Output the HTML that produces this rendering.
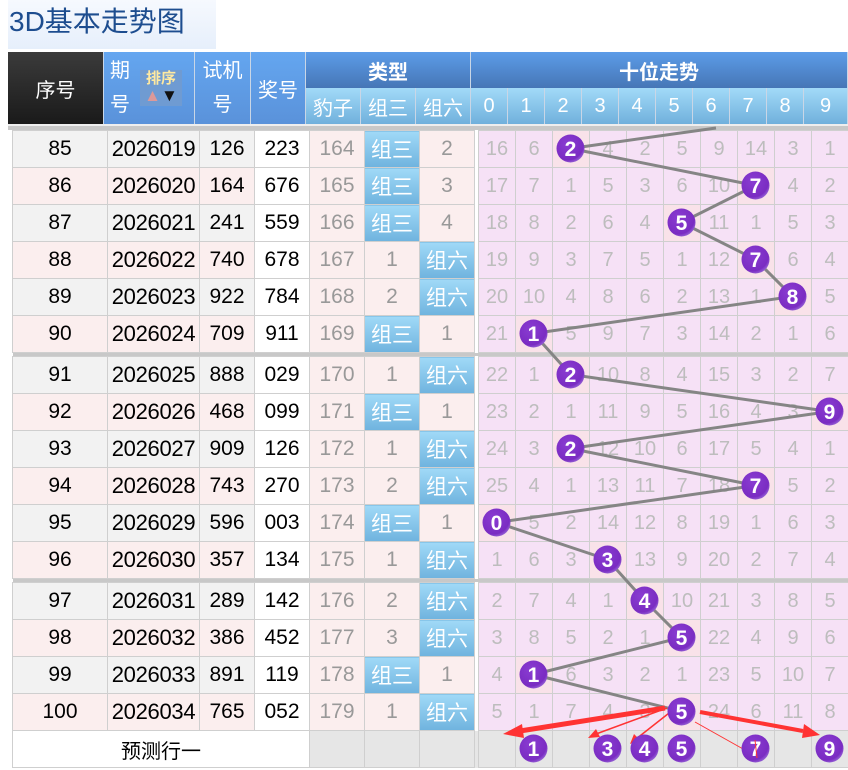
<!DOCTYPE html>
<html><head><meta charset="utf-8"><style>
*{margin:0;padding:0;box-sizing:border-box}
body{width:848px;height:770px;background:#fff;position:relative;overflow:hidden;font-family:"Liberation Sans","Noto Sans CJK SC",sans-serif}
.title{position:absolute;left:8px;top:0;width:208px;height:49px;background:linear-gradient(#f6f9fe,#e6effb);color:#1d4d8f;font-size:28px;line-height:44px;padding-left:1px}
.hd{position:absolute;color:#fff;display:flex;align-items:center;justify-content:center;text-align:center;font-size:20px;border-right:1px solid #c9d6e6}
.dark{background:linear-gradient(#3b3b3b,#1a1a1a)}
.blue{background:linear-gradient(#64a6f0,#5a92da)}
.top{background:linear-gradient(#5c9ce8,#4676b6);font-weight:bold}
.sub{background:linear-gradient(#a2daf8,#70b0dc)}
table{position:absolute;left:12px;top:130px;border-collapse:collapse;table-layout:fixed;width:836px}
td{border:1px solid #cfcfcf;height:37px;text-align:center;font-size:21px;padding:0;white-space:nowrap;overflow:hidden}
tr.s td{height:4px;background:#c8c8c8;border:none}
.g td.a,.g td.b,.g td.c{background:#f2f2f2}
.p td.a,.p td.b,.p td.c{background:#fbeeee}
td.b{font-size:22px;letter-spacing:-0.3px}
td.d{background:#fff}
td.e,td.f{background:#fbeeee;color:#999}
td.bl{background:linear-gradient(#a0d9f7,#6fb3de);color:#fff}
td.x{background:#fff;border-top:none;border-bottom:none}
td.n{background:#f6e1f6;color:#bdbdbd;font-size:20px}
td.h{background:#f9e2e9}
tr.pr td{background:#e6e6e6}
tr.pr td.w{background:#fff;font-size:20px}
svg{position:absolute;left:0;top:0}
</style></head><body>
<div class="title">3D基本走势图</div>
<div class="hd dark" style="left:8px;top:52px;width:96px;height:72px">序号</div>
<div class="hd blue" style="left:104px;top:52px;width:91px;height:72px;justify-content:flex-start;padding-left:6px"><div style="line-height:34px">期<br>号</div><div style="margin-left:10px;width:42px;height:36px;background:#6f9bd2;font-size:15px;line-height:17px;color:#ffe9a0;font-weight:bold">排序<br><span style="color:#d99;font-size:17px">▲</span><span style="color:#111;font-size:17px">▼</span></div></div>
<div class="hd blue" style="left:195px;top:52px;width:56px;height:72px;line-height:34px">试机<br>号</div>
<div class="hd blue" style="left:251px;top:52px;width:55px;height:72px">奖号</div>
<div class="hd top" style="left:306px;top:52px;width:165px;height:36px">类型</div>
<div class="hd sub" style="left:306px;top:88px;width:55px;height:36px">豹子</div>
<div class="hd sub" style="left:361px;top:88px;width:55px;height:36px">组三</div>
<div class="hd sub" style="left:416px;top:88px;width:55px;height:36px">组六</div>
<div class="hd top" style="left:471px;top:52px;width:377px;height:36px">十位走势</div>
<div class="hd sub" style="left:471px;top:88px;width:37px;height:36px">0</div>
<div class="hd sub" style="left:508px;top:88px;width:37px;height:36px">1</div>
<div class="hd sub" style="left:545px;top:88px;width:37px;height:36px">2</div>
<div class="hd sub" style="left:582px;top:88px;width:37px;height:36px">3</div>
<div class="hd sub" style="left:619px;top:88px;width:37px;height:36px">4</div>
<div class="hd sub" style="left:656px;top:88px;width:37px;height:36px">5</div>
<div class="hd sub" style="left:693px;top:88px;width:37px;height:36px">6</div>
<div class="hd sub" style="left:730px;top:88px;width:37px;height:36px">7</div>
<div class="hd sub" style="left:767px;top:88px;width:37px;height:36px">8</div>
<div class="hd sub" style="left:804px;top:88px;width:44px;height:36px">9</div>
<div style="position:absolute;left:8px;top:124px;width:840px;height:2px;background:#eee"></div>
<div style="position:absolute;left:8px;top:126px;width:840px;height:4px;background:#c8c8c8"></div>
<table>
<colgroup><col style="width:95px"><col style="width:92px"><col style="width:55px"><col style="width:55px"><col style="width:55px"><col style="width:55px"><col style="width:55px"><col style="width:4px"><col span="10" style="width:37px"></colgroup>
<tr class="g"><td class="a">85</td><td class="b">2026019</td><td class="c">126</td><td class="d">223</td><td class="e">164</td><td class="f bl">组三</td><td class="f">2</td><td class="x"></td><td class="n">16</td><td class="n">6</td><td class="n h"></td><td class="n">4</td><td class="n">2</td><td class="n">5</td><td class="n">9</td><td class="n">14</td><td class="n">3</td><td class="n">1</td></tr>
<tr class="p"><td class="a">86</td><td class="b">2026020</td><td class="c">164</td><td class="d">676</td><td class="e">165</td><td class="f bl">组三</td><td class="f">3</td><td class="x"></td><td class="n">17</td><td class="n">7</td><td class="n">1</td><td class="n">5</td><td class="n">3</td><td class="n">6</td><td class="n">10</td><td class="n h"></td><td class="n">4</td><td class="n">2</td></tr>
<tr class="g"><td class="a">87</td><td class="b">2026021</td><td class="c">241</td><td class="d">559</td><td class="e">166</td><td class="f bl">组三</td><td class="f">4</td><td class="x"></td><td class="n">18</td><td class="n">8</td><td class="n">2</td><td class="n">6</td><td class="n">4</td><td class="n h"></td><td class="n">11</td><td class="n">1</td><td class="n">5</td><td class="n">3</td></tr>
<tr class="p"><td class="a">88</td><td class="b">2026022</td><td class="c">740</td><td class="d">678</td><td class="e">167</td><td class="f">1</td><td class="f bl">组六</td><td class="x"></td><td class="n">19</td><td class="n">9</td><td class="n">3</td><td class="n">7</td><td class="n">5</td><td class="n">1</td><td class="n">12</td><td class="n h"></td><td class="n">6</td><td class="n">4</td></tr>
<tr class="g"><td class="a">89</td><td class="b">2026023</td><td class="c">922</td><td class="d">784</td><td class="e">168</td><td class="f">2</td><td class="f bl">组六</td><td class="x"></td><td class="n">20</td><td class="n">10</td><td class="n">4</td><td class="n">8</td><td class="n">6</td><td class="n">2</td><td class="n">13</td><td class="n">1</td><td class="n h"></td><td class="n">5</td></tr>
<tr class="p"><td class="a">90</td><td class="b">2026024</td><td class="c">709</td><td class="d">911</td><td class="e">169</td><td class="f bl">组三</td><td class="f">1</td><td class="x"></td><td class="n">21</td><td class="n h"></td><td class="n">5</td><td class="n">9</td><td class="n">7</td><td class="n">3</td><td class="n">14</td><td class="n">2</td><td class="n">1</td><td class="n">6</td></tr>
<tr class="s"><td colspan="18"></td></tr>
<tr class="g"><td class="a">91</td><td class="b">2026025</td><td class="c">888</td><td class="d">029</td><td class="e">170</td><td class="f">1</td><td class="f bl">组六</td><td class="x"></td><td class="n">22</td><td class="n">1</td><td class="n h"></td><td class="n">10</td><td class="n">8</td><td class="n">4</td><td class="n">15</td><td class="n">3</td><td class="n">2</td><td class="n">7</td></tr>
<tr class="p"><td class="a">92</td><td class="b">2026026</td><td class="c">468</td><td class="d">099</td><td class="e">171</td><td class="f bl">组三</td><td class="f">1</td><td class="x"></td><td class="n">23</td><td class="n">2</td><td class="n">1</td><td class="n">11</td><td class="n">9</td><td class="n">5</td><td class="n">16</td><td class="n">4</td><td class="n">3</td><td class="n h"></td></tr>
<tr class="g"><td class="a">93</td><td class="b">2026027</td><td class="c">909</td><td class="d">126</td><td class="e">172</td><td class="f">1</td><td class="f bl">组六</td><td class="x"></td><td class="n">24</td><td class="n">3</td><td class="n h"></td><td class="n">12</td><td class="n">10</td><td class="n">6</td><td class="n">17</td><td class="n">5</td><td class="n">4</td><td class="n">1</td></tr>
<tr class="p"><td class="a">94</td><td class="b">2026028</td><td class="c">743</td><td class="d">270</td><td class="e">173</td><td class="f">2</td><td class="f bl">组六</td><td class="x"></td><td class="n">25</td><td class="n">4</td><td class="n">1</td><td class="n">13</td><td class="n">11</td><td class="n">7</td><td class="n">18</td><td class="n h"></td><td class="n">5</td><td class="n">2</td></tr>
<tr class="g"><td class="a">95</td><td class="b">2026029</td><td class="c">596</td><td class="d">003</td><td class="e">174</td><td class="f bl">组三</td><td class="f">1</td><td class="x"></td><td class="n h"></td><td class="n">5</td><td class="n">2</td><td class="n">14</td><td class="n">12</td><td class="n">8</td><td class="n">19</td><td class="n">1</td><td class="n">6</td><td class="n">3</td></tr>
<tr class="p"><td class="a">96</td><td class="b">2026030</td><td class="c">357</td><td class="d">134</td><td class="e">175</td><td class="f">1</td><td class="f bl">组六</td><td class="x"></td><td class="n">1</td><td class="n">6</td><td class="n">3</td><td class="n h"></td><td class="n">13</td><td class="n">9</td><td class="n">20</td><td class="n">2</td><td class="n">7</td><td class="n">4</td></tr>
<tr class="s"><td colspan="18"></td></tr>
<tr class="g"><td class="a">97</td><td class="b">2026031</td><td class="c">289</td><td class="d">142</td><td class="e">176</td><td class="f">2</td><td class="f bl">组六</td><td class="x"></td><td class="n">2</td><td class="n">7</td><td class="n">4</td><td class="n">1</td><td class="n h"></td><td class="n">10</td><td class="n">21</td><td class="n">3</td><td class="n">8</td><td class="n">5</td></tr>
<tr class="p"><td class="a">98</td><td class="b">2026032</td><td class="c">386</td><td class="d">452</td><td class="e">177</td><td class="f">3</td><td class="f bl">组六</td><td class="x"></td><td class="n">3</td><td class="n">8</td><td class="n">5</td><td class="n">2</td><td class="n">1</td><td class="n h"></td><td class="n">22</td><td class="n">4</td><td class="n">9</td><td class="n">6</td></tr>
<tr class="g"><td class="a">99</td><td class="b">2026033</td><td class="c">891</td><td class="d">119</td><td class="e">178</td><td class="f bl">组三</td><td class="f">1</td><td class="x"></td><td class="n">4</td><td class="n h"></td><td class="n">6</td><td class="n">3</td><td class="n">2</td><td class="n">1</td><td class="n">23</td><td class="n">5</td><td class="n">10</td><td class="n">7</td></tr>
<tr class="p"><td class="a">100</td><td class="b">2026034</td><td class="c">765</td><td class="d">052</td><td class="e">179</td><td class="f">1</td><td class="f bl">组六</td><td class="x"></td><td class="n">5</td><td class="n">1</td><td class="n">7</td><td class="n">4</td><td class="n">3</td><td class="n h"></td><td class="n">24</td><td class="n">6</td><td class="n">11</td><td class="n">8</td></tr>
<tr class="pr"><td class="w" colspan="4">预测行一</td><td></td><td></td><td></td><td class="x" style="background:#e6e6e6"></td><td></td><td></td><td></td><td></td><td></td><td></td><td></td><td></td><td></td><td></td></tr>
</table>
<svg width="848" height="770" viewBox="0 0 848 770">
<defs><radialGradient id="c" cx="40%" cy="35%" r="70%"><stop offset="0" stop-color="#8a3cd2"/><stop offset="0.8" stop-color="#7a2cc2"/><stop offset="1" stop-color="#9a6ad8"/></radialGradient></defs>
<g stroke="#858585" stroke-width="3" fill="none">
<polyline points="570.5,148.5 716,128"/>
<polyline points="570.5,148.5 755.5,185.5 681.5,222.5 755.5,259.5 792.5,296.5 533.5,333.5"/>
<polyline points="533.5,333.5 570.5,374.5 829.5,411.5 570.5,448.5 755.5,485.5 496.5,522.5 607.5,559.5"/>
<polyline points="607.5,559.5 644.5,600.5 681.5,637.5 533.5,674.5 681.5,711.5"/>
</g>
<g fill="#f33" stroke="#f33">
<line x1="665" y1="708" x2="520" y2="731" stroke-width="5"/><polygon points="503,734 522,724 524,738" stroke="none"/>
<line x1="667" y1="708" x2="596" y2="734" stroke-width="1.5"/><polygon points="588,738 596,729 600,737" stroke="none"/>
<line x1="678" y1="706" x2="636" y2="739" stroke-width="1.5"/><polygon points="630,744 634,734 640,740" stroke="none"/>
<line x1="695" y1="722" x2="752" y2="754" stroke-width="1"/><polygon points="757,758 746,755 750,749" stroke="none"/>
<line x1="700" y1="712" x2="803" y2="731" stroke-width="4"/><polygon points="820,735 802,738 804,724" stroke="none"/>
</g>
<g font-family="Liberation Sans, sans-serif" font-weight="bold" font-size="21" fill="#fff" text-anchor="middle">
<g><circle cx="570.5" cy="148.5" r="14" fill="url(#c)"/><text x="570.5" y="156">2</text></g>
<g><circle cx="755.5" cy="185.5" r="14" fill="url(#c)"/><text x="755.5" y="193">7</text></g>
<g><circle cx="681.5" cy="222.5" r="14" fill="url(#c)"/><text x="681.5" y="230">5</text></g>
<g><circle cx="755.5" cy="259.5" r="14" fill="url(#c)"/><text x="755.5" y="267">7</text></g>
<g><circle cx="792.5" cy="296.5" r="14" fill="url(#c)"/><text x="792.5" y="304">8</text></g>
<g><circle cx="533.5" cy="333.5" r="14" fill="url(#c)"/><text x="533.5" y="341">1</text></g>
<g><circle cx="570.5" cy="374.5" r="14" fill="url(#c)"/><text x="570.5" y="382">2</text></g>
<g><circle cx="829.5" cy="411.5" r="14" fill="url(#c)"/><text x="829.5" y="419">9</text></g>
<g><circle cx="570.5" cy="448.5" r="14" fill="url(#c)"/><text x="570.5" y="456">2</text></g>
<g><circle cx="755.5" cy="485.5" r="14" fill="url(#c)"/><text x="755.5" y="493">7</text></g>
<g><circle cx="496.5" cy="522.5" r="14" fill="url(#c)"/><text x="496.5" y="530">0</text></g>
<g><circle cx="607.5" cy="559.5" r="14" fill="url(#c)"/><text x="607.5" y="567">3</text></g>
<g><circle cx="644.5" cy="600.5" r="14" fill="url(#c)"/><text x="644.5" y="608">4</text></g>
<g><circle cx="681.5" cy="637.5" r="14" fill="url(#c)"/><text x="681.5" y="645">5</text></g>
<g><circle cx="533.5" cy="674.5" r="14" fill="url(#c)"/><text x="533.5" y="682">1</text></g>
<g><circle cx="681.5" cy="711.5" r="14" fill="url(#c)"/><text x="681.5" y="719">5</text></g>
<g><circle cx="533.5" cy="748.5" r="14" fill="url(#c)"/><text x="533.5" y="756">1</text></g>
<g><circle cx="607.5" cy="748.5" r="14" fill="url(#c)"/><text x="607.5" y="756">3</text></g>
<g><circle cx="644.5" cy="748.5" r="14" fill="url(#c)"/><text x="644.5" y="756">4</text></g>
<g><circle cx="681.5" cy="748.5" r="14" fill="url(#c)"/><text x="681.5" y="756">5</text></g>
<g><circle cx="755.5" cy="748.5" r="14" fill="url(#c)"/><text x="755.5" y="756">7</text></g>
<g><circle cx="829.5" cy="748.5" r="14" fill="url(#c)"/><text x="829.5" y="756">9</text></g>
</g>
<line x1="755" y1="740" x2="757" y2="758" stroke="#f33" stroke-width="1"/>
</svg>
</body></html>
